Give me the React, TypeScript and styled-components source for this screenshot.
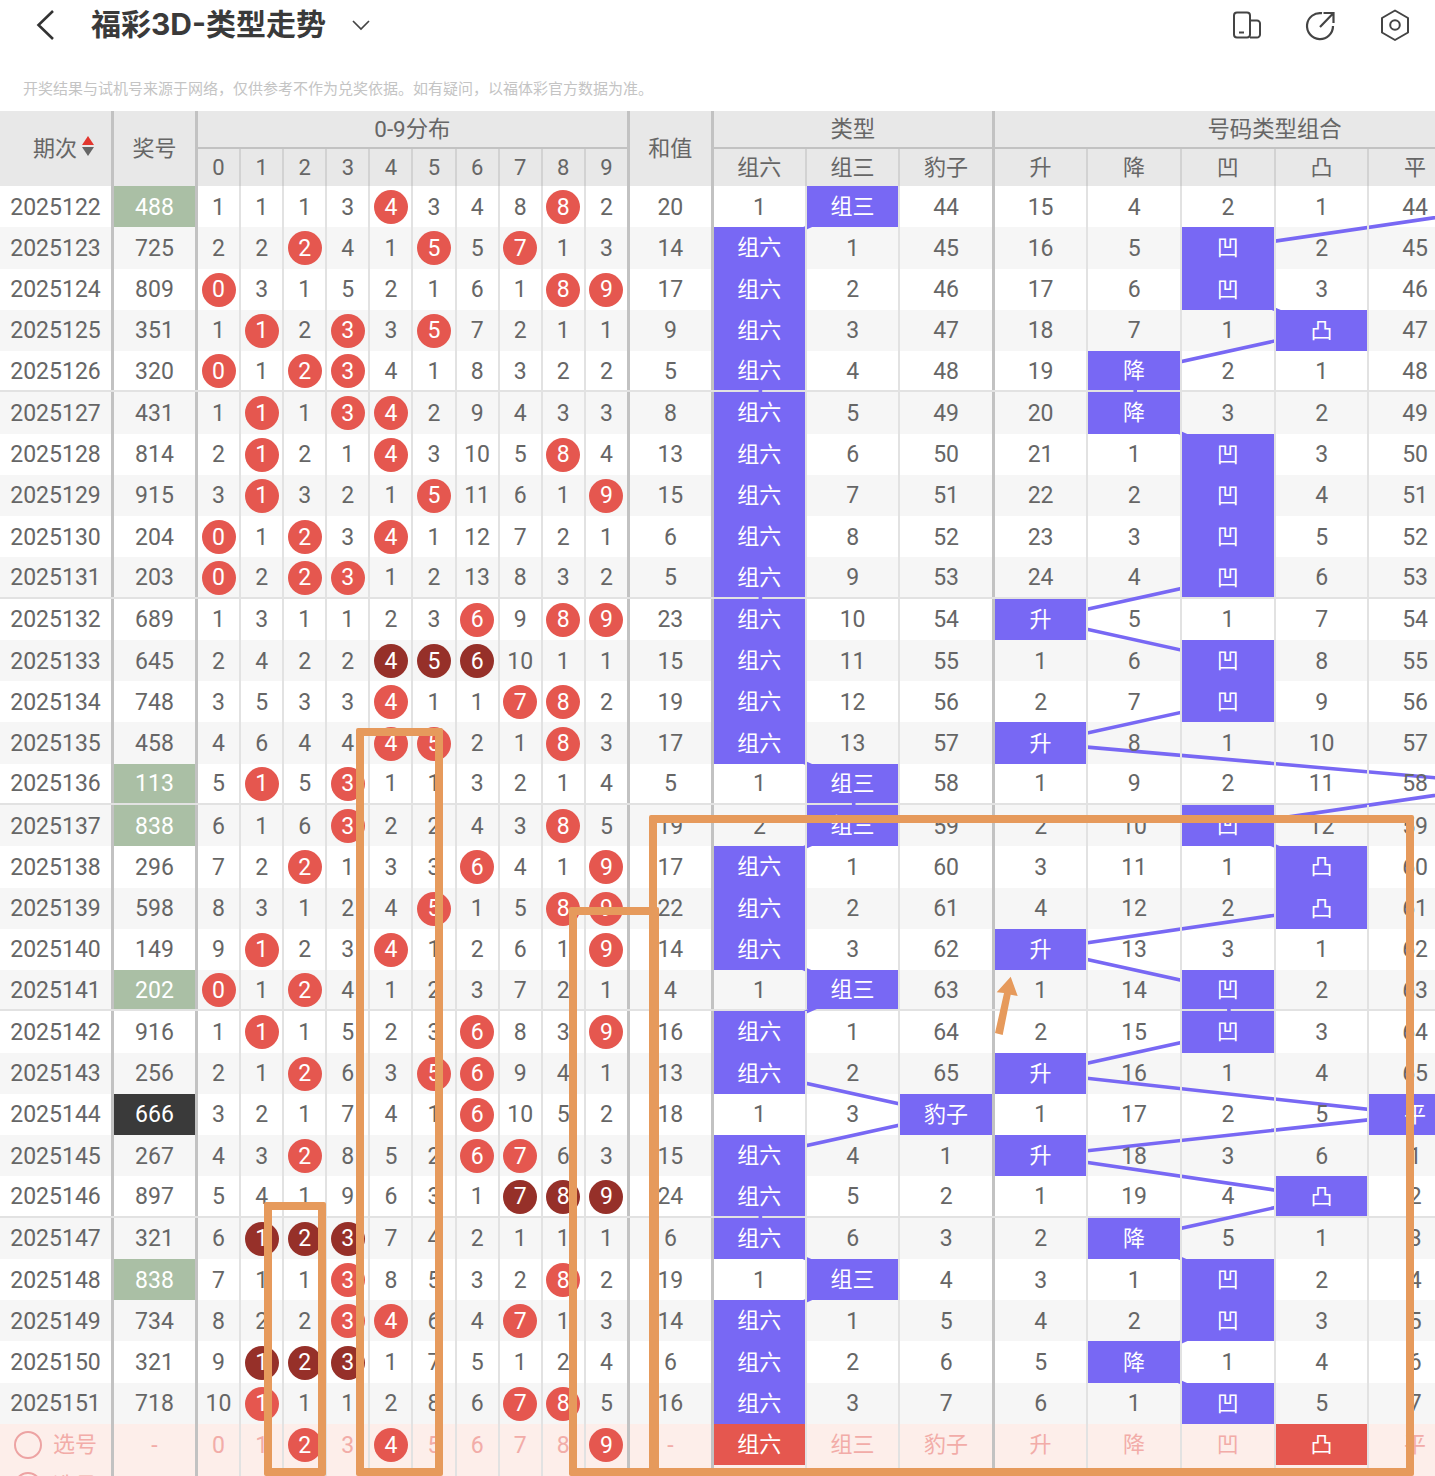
import * as React from 'react';
import styled, { createGlobalStyle } from 'styled-components';

const PURPLE = '#7868f4';
const RED = '#e5574f';
const DARK_RED = '#963029';
const ORANGE = '#e69a5c';
const PINK_TEXT = '#f2aca8';
const THIN_LINE = '#e2e2e2';
const THICK_LINE = '#c2c2c2';
const ROW_HEIGHT = 41.27;

const COLUMNS = [114, 84, ...Array(9).fill(43.1), 44, 84, 93, 93.5, 94.5, 93.5, 93.5, 94, 93.5, 93.5, 93.5];
const GRID_COLUMNS = COLUMNS.map((w) => `${w}px`).join(' ');

const GlobalStyle = createGlobalStyle`
  html, body {
    margin: 0;
    padding: 0;
    background: #ffffff;
  }
  body {
    font-family: Roboto, "Noto Sans CJK SC", sans-serif;
    color: #666666;
  }
`;

const Page = styled.div`
  position: relative;
  width: 1435px;
  height: 1476px;
  overflow: hidden;
  background: #ffffff;
`;

const TopBar = styled.header`
  display: flex;
  align-items: center;
  height: 50px;
  padding: 0 25px 0 35px;
  box-sizing: border-box;
`;

const Title = styled.h1`
  margin: 0 0 2px 36px;
  font-family: Inter, "Noto Sans CJK SC", sans-serif;
  font-size: 30px;
  font-weight: 700;
  line-height: 40px;
  color: #3a3a3a;
`;

const TitleCaret = styled.span`
  display: flex;
  margin-left: 25px;
`;

const Actions = styled.div`
  display: flex;
  align-items: center;
  gap: 43px;
  margin-left: auto;
`;

const Notice = styled.p`
  height: 61px;
  margin: 0;
  padding: 27px 0 0 23px;
  box-sizing: border-box;
  font-family: "Noto Sans CJK SC", sans-serif;
  font-size: 15px;
  line-height: 22px;
  color: #c4c4c4;
  white-space: nowrap;
`;

const TableHead = styled.div`
  display: grid;
  grid-template-columns: ${GRID_COLUMNS};
  grid-template-rows: 38px 37px;
  background: #e8e8e8;
`;

const HeadCell = styled.div<{ $span?: number; $tall?: boolean; $group?: boolean; $thick?: boolean; $word?: boolean }>`
  display: flex;
  align-items: center;
  justify-content: center;
  box-sizing: border-box;
  grid-column: span ${(p) => p.$span ?? 1};
  grid-row: span ${(p) => (p.$tall ? 2 : 1)};
  padding-bottom: ${(p) => (p.$word ? 5 : 0)}px;
  font-size: ${(p) => (p.$group ? 22.4 : 22)}px;
  color: #666666;
  border-right: ${(p) => (p.$thick ? `3px solid ${THICK_LINE}` : `2px solid #d2d2d2`)};
  border-bottom: ${(p) => (p.$group ? `2px solid ${THICK_LINE}` : '0')};
`;

const SortCell = styled(HeadCell)`
  padding-left: 16px;
`;

const SortMark = styled.span`
  display: inline-flex;
  flex-direction: column;
  gap: 2px;
  margin-left: 5px;
`;

const SortUp = styled.i`
  width: 0;
  height: 0;
  border-left: 6px solid transparent;
  border-right: 6px solid transparent;
  border-bottom: 9px solid #e2362e;
`;

const SortDown = styled.i`
  width: 0;
  height: 0;
  border-left: 6px solid transparent;
  border-right: 6px solid transparent;
  border-top: 9px solid #666666;
`;

const TableBody = styled.div`
  position: relative;
`;

const Lines = styled.svg`
  position: absolute;
  top: 0;
  left: 0;
  z-index: 1;
`;

const Row = styled.div<{ $even?: boolean; $gap?: boolean; $pick?: boolean }>`
  display: grid;
  grid-template-columns: ${GRID_COLUMNS};
  height: ${ROW_HEIGHT}px;
  box-sizing: border-box;
  background: ${(p) => (p.$pick ? '#fdeeea' : p.$even ? '#f6f6f6' : '#ffffff')};
  border-bottom: ${(p) => (p.$gap ? `2px solid ${THIN_LINE}` : '0')};
`;

const Cell = styled.div<{ $thick?: boolean; $fill?: string; $pink?: boolean }>`
  position: relative;
  z-index: 2;
  display: flex;
  align-items: center;
  justify-content: center;
  box-sizing: border-box;
  padding-top: 1px;
  font-size: 23px;
  white-space: nowrap;
  color: ${(p) => (p.$fill ? '#ffffff' : p.$pink ? PINK_TEXT : '#666666')};
  background: ${(p) => p.$fill ?? 'transparent'};
  border-right: ${(p) => (p.$thick ? `3px solid ${THICK_LINE}` : `2px solid ${THIN_LINE}`)};
`;

const WordCell = styled(Cell)`
  padding-top: 0;
  padding-bottom: 5px;
  font-size: 22px;
`;

const Ball = styled.span<{ $dark?: boolean }>`
  display: flex;
  align-items: center;
  justify-content: center;
  flex: none;
  width: 34px;
  height: 34px;
  border-radius: 50%;
  color: #ffffff;
  background: ${(p) => (p.$dark ? DARK_RED : RED)};
`;

const PickLabel = styled(Cell)`
  justify-content: flex-start;
  gap: 11px;
  padding-left: 14px;
  padding-top: 0;
  font-size: 22px;
`;

const PickText = styled.span`
  margin-bottom: 5px;
`;

const Radio = styled.i`
  flex: none;
  width: 28px;
  height: 28px;
  box-sizing: border-box;
  border: 2px solid #eda3a3;
  border-radius: 50%;
`;

const Mark = styled.div<{ $x: number; $y: number; $w: number; $h: number }>`
  position: absolute;
  z-index: 3;
  left: ${(p) => p.$x}px;
  top: ${(p) => p.$y}px;
  width: ${(p) => p.$w}px;
  height: ${(p) => p.$h}px;
  box-sizing: border-box;
  border: 8px solid ${ORANGE};
  border-radius: 2px;
`;

const ArrowMark = styled.svg`
  position: absolute;
  z-index: 3;
  left: 990px;
  top: 970px;
`;

// period, number, 0-9 values, sum, type values, form values
const RAW: [string, string, string, number, string, string][] = [
  ['2025122', '488', '1 1 1 3 4 3 4 8 8 2', 20, '1 0 44', '15 4 2 1 44'],
  ['2025123', '725', '2 2 2 4 1 5 5 7 1 3', 14, '0 1 45', '16 5 0 2 45'],
  ['2025124', '809', '0 3 1 5 2 1 6 1 8 9', 17, '0 2 46', '17 6 0 3 46'],
  ['2025125', '351', '1 1 2 3 3 5 7 2 1 1', 9, '0 3 47', '18 7 1 0 47'],
  ['2025126', '320', '0 1 2 3 4 1 8 3 2 2', 5, '0 4 48', '19 0 2 1 48'],
  ['2025127', '431', '1 1 1 3 4 2 9 4 3 3', 8, '0 5 49', '20 0 3 2 49'],
  ['2025128', '814', '2 1 2 1 4 3 10 5 8 4', 13, '0 6 50', '21 1 0 3 50'],
  ['2025129', '915', '3 1 3 2 1 5 11 6 1 9', 15, '0 7 51', '22 2 0 4 51'],
  ['2025130', '204', '0 1 2 3 4 1 12 7 2 1', 6, '0 8 52', '23 3 0 5 52'],
  ['2025131', '203', '0 2 2 3 1 2 13 8 3 2', 5, '0 9 53', '24 4 0 6 53'],
  ['2025132', '689', '1 3 1 1 2 3 6 9 8 9', 23, '0 10 54', '0 5 1 7 54'],
  ['2025133', '645', '2 4 2 2 4 5 6 10 1 1', 15, '0 11 55', '1 6 0 8 55'],
  ['2025134', '748', '3 5 3 3 4 1 1 7 8 2', 19, '0 12 56', '2 7 0 9 56'],
  ['2025135', '458', '4 6 4 4 4 5 2 1 8 3', 17, '0 13 57', '0 8 1 10 57'],
  ['2025136', '113', '5 1 5 3 1 1 3 2 1 4', 5, '1 0 58', '1 9 2 11 58'],
  ['2025137', '838', '6 1 6 3 2 2 4 3 8 5', 19, '2 0 59', '2 10 0 12 59'],
  ['2025138', '296', '7 2 2 1 3 3 6 4 1 9', 17, '0 1 60', '3 11 1 0 60'],
  ['2025139', '598', '8 3 1 2 4 5 1 5 8 9', 22, '0 2 61', '4 12 2 0 61'],
  ['2025140', '149', '9 1 2 3 4 1 2 6 1 9', 14, '0 3 62', '0 13 3 1 62'],
  ['2025141', '202', '0 1 2 4 1 2 3 7 2 1', 4, '1 0 63', '1 14 0 2 63'],
  ['2025142', '916', '1 1 1 5 2 3 6 8 3 9', 16, '0 1 64', '2 15 0 3 64'],
  ['2025143', '256', '2 1 2 6 3 5 6 9 4 1', 13, '0 2 65', '0 16 1 4 65'],
  ['2025144', '666', '3 2 1 7 4 1 6 10 5 2', 18, '1 3 0', '1 17 2 5 0'],
  ['2025145', '267', '4 3 2 8 5 2 6 7 6 3', 15, '0 4 1', '0 18 3 6 1'],
  ['2025146', '897', '5 4 1 9 6 3 1 7 8 9', 24, '0 5 2', '1 19 4 0 2'],
  ['2025147', '321', '6 1 2 3 7 4 2 1 1 1', 6, '0 6 3', '2 0 5 1 3'],
  ['2025148', '838', '7 1 1 3 8 5 3 2 8 2', 19, '1 0 4', '3 1 0 2 4'],
  ['2025149', '734', '8 2 2 3 4 6 4 7 1 3', 14, '0 1 5', '4 2 0 3 5'],
  ['2025150', '321', '9 1 2 3 1 7 5 1 2 4', 6, '0 2 6', '5 0 1 4 6'],
  ['2025151', '718', '10 1 1 1 2 8 6 7 8 5', 16, '0 3 7', '6 1 0 5 7'],
];

const TYPE_NAMES = ['组六', '组三', '豹子'];
const FORM_NAMES = ['升', '降', '凹', '凸', '平'];

const typeOf = (d: number[]) => {
  const kinds = new Set(d).size;
  return kinds === 3 ? 0 : kinds === 2 ? 1 : 2;
};

const formOf = ([a, b, c]: number[]) => {
  if (a < b && b < c) return 0;
  if (a > b && b > c) return 1;
  if (a > b && b < c) return 2;
  if (a < b && b > c) return 3;
  if (a === b && b === c) return 4;
  return 5; // a column past the right edge of the screen
};

const rows = RAW.map(([period, number, dist, sum, types, forms]) => {
  const digits = number.split('').map(Number);
  const sorted = [...digits].sort((a, b) => a - b);
  return {
    period,
    number,
    digits,
    sum,
    dist: dist.split(' '),
    types: types.split(' '),
    forms: forms.split(' '),
    type: typeOf(digits),
    form: formOf(digits),
    run: sorted[1] === sorted[0] + 1 && sorted[2] === sorted[1] + 1,
  };
});

const centerOf = (col: number) => {
  const left = COLUMNS.slice(0, col).reduce((a, b) => a + b, 0);
  return left + COLUMNS[col] / 2;
};

const linePath = (colOf: (i: number) => number) =>
  rows
    .map((_, i) => `${i ? 'L' : 'M'}${centerOf(colOf(i)).toFixed(1)} ${(ROW_HEIGHT * (i + 0.5)).toFixed(1)}`)
    .join(' ');

const numberFill = (type: number) => (type === 2 ? '#3a3a3a' : type === 1 ? '#aabfa5' : undefined);

const BackIcon = () => (
  <svg width="20" height="32" viewBox="0 0 20 32" fill="none" stroke="#333" strokeWidth="2.6">
    <path d="M18 2 3.5 16 18 30" />
  </svg>
);

const ChevronIcon = () => (
  <svg width="20" height="12" viewBox="0 0 20 12" fill="none" stroke="#444" strokeWidth="1.7">
    <path d="M2 2l8 8 8-8" />
  </svg>
);

const DevicesIcon = () => (
  <svg width="30" height="30" viewBox="0 0 30 30" fill="none" stroke="#444" strokeWidth="2">
    <rect x="2" y="2.5" width="16" height="25" rx="3" />
    <path d="M18 10.5h7a3 3 0 0 1 3 3v11a3 3 0 0 1-3 3h-7" />
    <path d="M7 22.5h5" />
  </svg>
);

const ShareIcon = () => (
  <svg width="32" height="32" viewBox="0 0 32 32" fill="none" stroke="#444" strokeWidth="2.2">
    <path d="M17 4.2A13 13 0 1 0 28 17" />
    <path d="M15 18 28 4.5M18.5 4H28.5V14" />
  </svg>
);

const HexIcon = () => (
  <svg width="30" height="32" viewBox="0 0 30 32" fill="none" stroke="#444" strokeWidth="2">
    <path d="M15 1.5 28 9v14.5L15 31 2 23.5V9z" strokeLinejoin="round" />
    <circle cx="15" cy="16" r="4.8" />
  </svg>
);

const Head = () => (
  <TableHead>
    <SortCell $tall $thick $word>
      期次
      <SortMark>
        <SortUp />
        <SortDown />
      </SortMark>
    </SortCell>
    <HeadCell $tall $thick $word>奖号</HeadCell>
    <HeadCell $span={10} $group $thick $word>0-9分布</HeadCell>
    <HeadCell $tall $thick $word>和值</HeadCell>
    <HeadCell $span={3} $group $thick $word>类型</HeadCell>
    <HeadCell $span={6} $group $word>号码类型组合</HeadCell>
    {Array.from({ length: 10 }, (_, n) => (
      <HeadCell key={n} $thick={n === 9}>{n}</HeadCell>
    ))}
    {TYPE_NAMES.map((name, i) => (
      <HeadCell key={name} $thick={i === 2} $word>{name}</HeadCell>
    ))}
    {FORM_NAMES.map((name) => (
      <HeadCell key={name} $word>{name}</HeadCell>
    ))}
  </TableHead>
);

const PickRow = ({ label }: { label: boolean }) => {
  const balls = [2, 4, 9];
  return (
    <Row $pick>
      <PickLabel $thick $pink>
        <Radio />
        <PickText>选号</PickText>
      </PickLabel>
      <Cell $thick $pink>{label ? '-' : ''}</Cell>
      {Array.from({ length: 10 }, (_, n) => (
        <Cell key={n} $thick={n === 9} $pink>
          {label ? balls.includes(n) ? <Ball>{n}</Ball> : n : ''}
        </Cell>
      ))}
      <Cell $thick $pink>{label ? '-' : ''}</Cell>
      {TYPE_NAMES.map((name, i) => (
        <WordCell key={name} $thick={i === 2} $pink $fill={label && i === 0 ? RED : undefined}>
          {label ? name : ''}
        </WordCell>
      ))}
      {FORM_NAMES.map((name, i) => (
        <WordCell key={name} $pink $fill={label && i === 3 ? RED : undefined}>
          {label ? name : ''}
        </WordCell>
      ))}
    </Row>
  );
};

const Body = () => (
  <TableBody>
    <Lines width="1600" height={ROW_HEIGHT * rows.length} fill="none" stroke={PURPLE} strokeWidth="3.6">
      <path d={linePath((i) => 13 + rows[i].type)} />
      <path d={linePath((i) => 16 + rows[i].form)} />
    </Lines>
    {rows.map((row, i) => (
      <Row key={row.period} $even={i % 2 === 1} $gap={i % 5 === 4 && i < rows.length - 1}>
        <Cell $thick>{row.period}</Cell>
        <Cell $thick $fill={numberFill(row.type)}>{row.number}</Cell>
        {row.dist.map((value, n) => (
          <Cell key={n} $thick={n === 9}>
            {row.digits.includes(n) ? <Ball $dark={row.run}>{n}</Ball> : value}
          </Cell>
        ))}
        <Cell $thick>{row.sum}</Cell>
        {row.types.map((value, t) =>
          t === row.type ? (
            <WordCell key={t} $thick={t === 2} $fill={PURPLE}>{TYPE_NAMES[t]}</WordCell>
          ) : (
            <Cell key={t} $thick={t === 2}>{value}</Cell>
          ),
        )}
        {row.forms.map((value, f) =>
          f === row.form ? (
            <WordCell key={f} $fill={PURPLE}>{FORM_NAMES[f]}</WordCell>
          ) : (
            <Cell key={f}>{value}</Cell>
          ),
        )}
      </Row>
    ))}
    <PickRow label />
    <PickRow label={false} />
  </TableBody>
);

const App = () => (
  <Page>
    <GlobalStyle />
    <TopBar>
      <BackIcon />
      <Title>福彩3D-类型走势</Title>
      <TitleCaret>
        <ChevronIcon />
      </TitleCaret>
      <Actions>
        <DevicesIcon />
        <ShareIcon />
        <HexIcon />
      </Actions>
    </TopBar>
    <Notice>开奖结果与试机号来源于网络，仅供参考不作为兑奖依据。如有疑问，以福体彩官方数据为准。</Notice>
    <Head />
    <Body />
    <Mark $x={356} $y={728} $w={87} $h={748} />
    <Mark $x={264} $y={1202} $w={62} $h={274} />
    <Mark $x={569} $y={907} $w={90} $h={569} />
    <Mark $x={649} $y={815} $w={765} $h={661} />
    <ArrowMark width="32" height="70" viewBox="0 0 32 70">
      <path d="M20.7 6.7 6.7 22.3 14 23 5 63l7.7 2L20.7 24.7 27.7 26z" fill={ORANGE} />
    </ArrowMark>
  </Page>
);

export default App;
